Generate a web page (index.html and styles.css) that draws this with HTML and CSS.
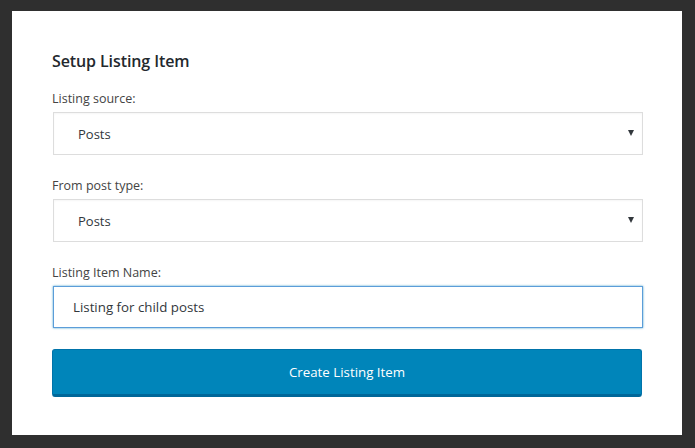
FILE: index.html
```html
<!DOCTYPE html>
<html>
<head>
<meta charset="utf-8">
<link rel="stylesheet" href="styles.css">
</head>
<body>
<div class="panel">
  <h2 class="title">Setup Listing Item</h2>
  <div class="field">
    <label class="label">Listing source:</label>
    <div class="select"><span>Posts</span><span class="arrow"></span></div>
  </div>
  <div class="field">
    <label class="label">From post type:</label>
    <div class="select"><span>Posts</span><span class="arrow"></span></div>
  </div>
  <div class="field">
    <label class="label">Listing Item Name:</label>
    <div class="input">Listing for child posts</div>
  </div>
  <div class="button">Create Listing Item</div>
</div>
</body>
</html>
```
FILE: styles.css
```css
html, body {
  margin: 0;
  padding: 0;
  background: #2f2f2f;
  height: 100%;
}
body {
  padding: 11px 13px 0 12px;
  box-sizing: border-box;
  font-family: "Open Sans", "Noto Sans", sans-serif;
  color: #32373c;
}
.panel {
  background: #fff;
  width: 670px;
  height: 424px;
  box-sizing: border-box;
  padding: 40px 40px 0 40px;
}
.title {
  margin: 0 0 19px 0;
  font-size: 16px;
  line-height: 20px;
  font-weight: 600;
  color: #23282d;
  letter-spacing: -0.1px;
}
.field {
  margin-bottom: 22px;
}
.label {
  display: block;
  font-size: 12.5px;
  line-height: 18px;
  color: #444;
  margin-bottom: 4px;
}
.select {
  margin: 0 -1px 0 1px;
  height: 43px;
  box-sizing: border-box;
  border: 1px solid #ddd;
  display: flex;
  align-items: center;
  justify-content: space-between;
  padding: 0 8px 0 24px;
  font-size: 13px;
  color: #32373c;
  box-shadow: inset 0 1px 2px rgba(0,0,0,0.04);
}
.arrow {
  width: 0;
  height: 0;
  border-left: 3.5px solid transparent;
  border-right: 3.5px solid transparent;
  border-top: 6px solid #32373c;
  margin-top: -2px;
}
.input {
  margin: 0 -1px 0 1px;
  height: 42px;
  box-sizing: border-box;
  border: 1px solid #5b9dd9;
  box-shadow: 0 0 2px rgba(30,140,190,0.8);
  display: flex;
  align-items: center;
  padding-left: 19px;
  font-size: 13.3px;
  color: #32373c;
}
.button {
  margin-top: -1px;
  height: 48px;
  box-sizing: border-box;
  background: #0085ba;
  border: 1px solid #0073aa;
  border-bottom: 3px solid #006799;
  border-radius: 3px;
  color: #fff;
  font-size: 13.3px;
  display: flex;
  align-items: center;
  justify-content: center;
  padding-bottom: 1px;
}
```
